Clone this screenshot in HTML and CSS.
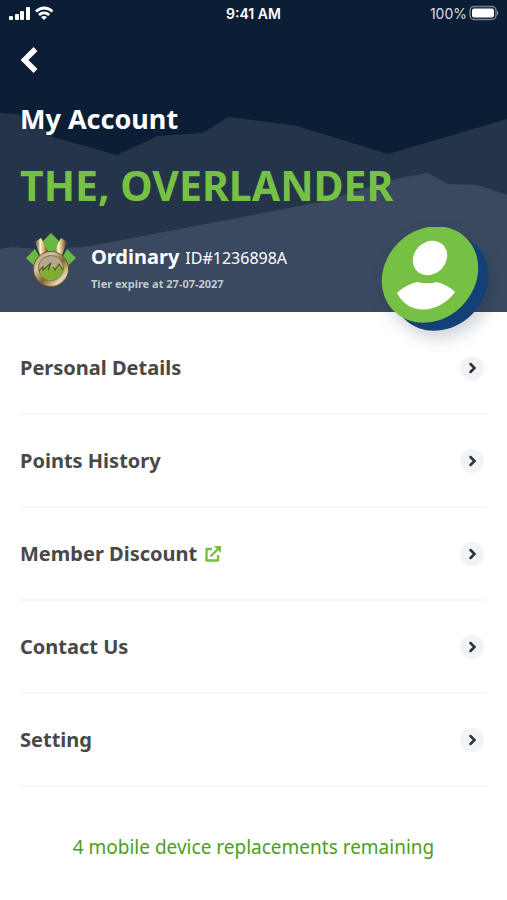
FILE: index.html
```html
<!DOCTYPE html>
<html lang="en">
<head>
<meta charset="utf-8">
<meta name="viewport" content="width=device-width, initial-scale=1">
<title>My Account</title>
<link rel="stylesheet" href="styles.css">
</head>
<body>
<header class="hero">
  <svg class="mountains" viewBox="0 0 507 312" preserveAspectRatio="none" aria-hidden="true">
    <path fill="#24354a" d="M0 113L18 114L36 122L53 137L117 155L158 136L203 133L228 117L253 120L297 126L388 154L487 125L507 119V312H0Z"/>
    <path fill="#3a495f" d="M0 249L12 247L40 249L85 247L253 215L320 202L400 178L428 173L448 184L478 185L507 195V312H0Z"/>
  </svg>
  <div class="status">
    <div class="signal">
      <svg width="46" height="16" viewBox="0 0 46 16" fill="#fff" aria-hidden="true">
        <rect x="1" y="11" width="4" height="4" rx="1"/><rect x="7" y="9" width="4" height="6" rx="1"/><rect x="12" y="6" width="4" height="9" rx="1"/><rect x="18" y="2" width="4" height="13" rx="1"/>
        <g fill="none" stroke="#fff" stroke-width="2.8"><path d="M28 6.500C33 1.800 39.500 1.800 44.500 6.500"/><path d="M31 10C34 7.200 38 7.200 41.200 10"/></g>
        <path d="M33 12Q36 9.800 39 12L36 15Z"/>
      </svg>
    </div>
    <span class="time">9:41 AM</span>
    <div class="battery">
      <span>100%</span>
      <svg width="30" height="16" viewBox="0 0 30 16" aria-hidden="true">
        <rect x="1" y="1.500" width="26" height="13" rx="4" fill="none" stroke="#77818f" stroke-width="1.500"/><rect x="3" y="3.500" width="22" height="9" rx="2" fill="#fff"/><path d="M28 5.500Q31 8 28 10.500Z" fill="#77818f"/>
      </svg>
    </div>
  </div>
  <button class="back" type="button" aria-label="Back">
    <svg width="18" height="28" viewBox="0 0 18 28" aria-hidden="true"><path d="M15.500 3L4.500 14L15.500 25" fill="none" stroke="#fff" stroke-width="5.500"/></svg>
  </button>
  <h1 class="title">My Account</h1>
  <p class="name">THE, OVERLANDER</p>
  <div class="tier">
    <svg class="medal" width="52" height="56" viewBox="0 0 52 56" aria-hidden="true">
      <defs>
        <linearGradient id="gold" x1="0" y1="0" x2="1" y2="1"><stop offset="0" stop-color="#a98d57"/><stop offset=".3" stop-color="#d5c8a9"/><stop offset=".55" stop-color="#80652f"/><stop offset=".8" stop-color="#e6d9ba"/><stop offset="1" stop-color="#6d4c0e"/></linearGradient>
        <linearGradient id="ribbon" x1="0" y1="0" x2="1" y2="0"><stop offset="0" stop-color="#5b3b12"/><stop offset=".4" stop-color="#fff2cb"/><stop offset=".65" stop-color="#c7a56b"/><stop offset="1" stop-color="#49300f"/></linearGradient>
      </defs>
      <path d="M26 0L51 25L26 49L1 25Z" fill="#69b944"/>
      <path d="M9 7L14 4L17 8L25 22L15 25L9 14Z" fill="#243650"/><path d="M43 7L38 4L35 8L27 22L37 25L43 14Z" fill="#243650"/>
      <path d="M10 9L16 5L24 20L16 25Z" fill="url(#ribbon)"/><path d="M42 9L36 5L28 20L36 25Z" fill="url(#ribbon)"/>
      <circle cx="26" cy="36" r="17.500" fill="url(#gold)" stroke="#745522"/>
      <circle cx="26" cy="35" r="12.500" fill="#b7a78b" stroke="#8b7046" stroke-width="1"/>
      <path d="M15 39L24 32L28 37L33 32L38 37A12 12 0 0 1 16 41Z" fill="#80ae2c"/>
      <path d="M14 38L18 34L18 37L26 30L23 37M28 34L30 37L34 31L38 37" fill="none" stroke="#4d6022" stroke-width="1.200"/>
    </svg>
    <div class="tier-text">
      <p class="tier-main"><strong>Ordinary</strong><span>ID#1236898A</span></p>
      <p class="expiry">Tier expire at 27-07-2027</p>
    </div>
  </div>
  <svg class="avatar" viewBox="0 0 108 104" role="img" aria-label="Profile">
    <ellipse cx="59.500" cy="55.500" rx="51.400" ry="44.800" fill="#144078" transform="rotate(-45 59.500 55.500)"/>
    <ellipse cx="49" cy="47.500" rx="51.400" ry="44.800" fill="#76c144" transform="rotate(-45 49 47.500)"/>
    <ellipse cx="49" cy="31" rx="18.500" ry="15.800" fill="#fff" transform="rotate(-45 49 31)"/>
    <path fill="#fff" d="M16 66C22 60 29 57 36 55Q46 57.500 56 55C63 57 69 60 74 65C66 76 54 82.500 42 82.500C30 82.500 21 76 16 66Z"/>
  </svg>
</header>
<main>
  <nav class="menu">
    <a class="item" href="#personal">Personal Details<span class="go"><svg viewBox="0 0 24 24"><path d="M10.500 8L14.500 12L10.500 16"/></svg></span></a>
    <a class="item" href="#points">Points History<span class="go"><svg viewBox="0 0 24 24"><path d="M10.500 8L14.500 12L10.500 16"/></svg></span></a>
    <a class="item" href="#discount">Member Discount<svg class="external" viewBox="0 0 16 16" aria-hidden="true"><path d="M7 3H1.500V14.500H13V9M5.500 10.500L13 3" fill="none" stroke="#76c144" stroke-width="2.400" stroke-linejoin="round"/><path d="M9 0H16V7Z" fill="#76c144"/></svg><span class="go"><svg viewBox="0 0 24 24"><path d="M10.500 8L14.500 12L10.500 16"/></svg></span></a>
    <a class="item" href="#contact">Contact Us<span class="go"><svg viewBox="0 0 24 24"><path d="M10.500 8L14.500 12L10.500 16"/></svg></span></a>
    <a class="item" href="#setting">Setting<span class="go"><svg viewBox="0 0 24 24"><path d="M10.500 8L14.500 12L10.500 16"/></svg></span></a>
  </nav>
  <p class="remaining">4 mobile device replacements remaining</p>
</main>
</body>
</html>
```
FILE: styles.css
```css
* { box-sizing: border-box; }
body { margin: 0; background: #fff; color: #484848; font-family: "Noto Sans", sans-serif; }
h1, p { margin: 0; }
svg { display: block; flex: none; }
.hero { position: relative; isolation: isolate; background: #0c1e35; color: #fff; padding-bottom: 16px; }
.mountains { position: absolute; inset: 0; width: 100%; height: 100%; z-index: -1; }
.status { display: grid; grid-template-columns: 1fr auto 1fr; align-items: center; height: 26px; padding: 0 8px; font-family: Inter, sans-serif; font-size: 14px; }
.time { font-weight: 600; }
.battery { display: flex; align-items: center; justify-content: flex-end; gap: 2px; color: #d8dde4; }
.back { display: block; margin: 20px 0 0 20px; padding: 0; border: 0; background: none; cursor: pointer; }
.title { margin: 27px 20px 0; font-size: 27px; line-height: 36px; font-weight: 700; }
.name { margin: 24px 20px 0; color: #76c144; font-size: 41px; line-height: 48px; font-weight: 700; white-space: nowrap; }
.tier { display: flex; align-items: flex-end; gap: 14px; margin-top: 24px; padding-left: 25px; }
.medal { margin-bottom: 7px; }
.tier-main { display: flex; align-items: baseline; gap: 6px; font-size: 16px; line-height: 28px; }
.tier-main strong { font-size: 20px; }
.expiry { color: #c0c7d1; font-size: 11px; line-height: 24px; font-weight: 700; }
.avatar { position: absolute; right: 18px; bottom: -19px; width: 108px; height: 104px; filter: drop-shadow(4px 8px 8px rgba(20, 40, 70, .2)); }
.menu { padding: 10px 20px 0; }
.item { display: flex; align-items: center; height: 93px; border-bottom: 2px solid #f7f7f7; color: inherit; font-size: 20px; font-weight: 700; text-decoration: none; }
.go { margin-left: auto; margin-right: 3px; width: 24px; height: 24px; border-radius: 50%; background: #f2f3f4; }
.go path { fill: none; stroke: #2c3440; stroke-width: 2.5; stroke-linecap: round; }
.external { width: 16px; height: 16px; margin-left: 8px; }
.remaining { padding: 46px 20px 24px; color: #4d9e22; font-size: 19px; line-height: 28px; text-align: center; }
```
